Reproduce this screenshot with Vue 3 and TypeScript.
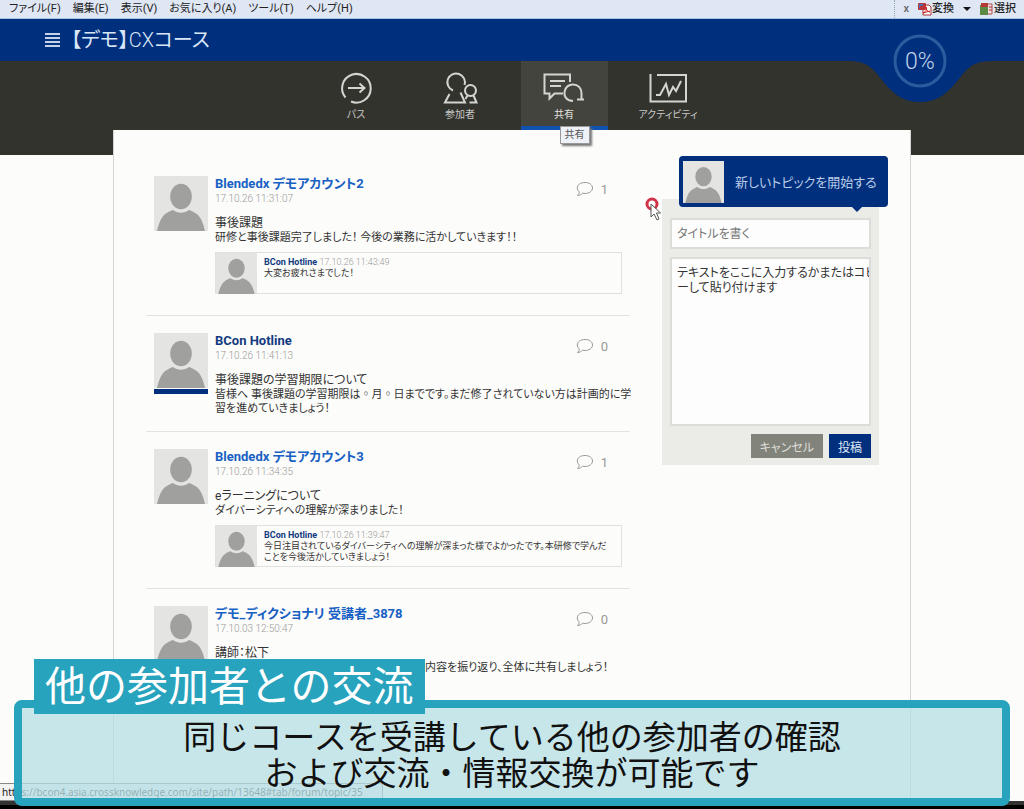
<script setup lang="ts">
import { ref } from 'vue'

interface Reply {
  author: string
  date: string
  text: string
}

interface Post {
  author: string
  date: string
  title: string
  text: string
  comments: number
  staff?: boolean
  indented?: boolean
  reply?: Reply
}

const menus: string[] = ['ファイル(F)', '編集(E)', '表示(V)', 'お気に入り(A)', 'ツール(T)', 'ヘルプ(H)']

const tabs = [
  { id: 'path', label: 'パス' },
  { id: 'people', label: '参加者' },
  { id: 'share', label: '共有' },
  { id: 'activity', label: 'アクティビティ' },
]
const activeTab = ref('share')

const posts: Post[] = [
  {
    author: 'Blendedx デモアカウント2',
    date: '17.10.26 11:31:07',
    title: '事後課題',
    text: '研修と事後課題完了しました！ 今後の業務に活かしていきます！！',
    comments: 1,
    reply: { author: 'BCon Hotline', date: '17.10.26 11:43:49', text: '大変お疲れさまでした！' },
  },
  {
    author: 'BCon Hotline',
    date: '17.10.26 11:41:13',
    title: '事後課題の学習期限について',
    text: '皆様へ 事後課題の学習期限は◦月◦日までです。まだ修了されていない方は計画的に学\n習を進めていきましょう！',
    comments: 0,
    staff: true,
  },
  {
    author: 'Blendedx デモアカウント3',
    date: '17.10.26 11:34:35',
    title: 'eラーニングについて',
    text: 'ダイバーシティへの理解が深まりました！',
    comments: 1,
    reply: {
      author: 'BCon Hotline',
      date: '17.10.26 11:39:47',
      text: '今日注目されているダイバーシティへの理解が深まった様でよかったです。本研修で学んだ\nことを今後活かしていきましょう！',
    },
  },
  {
    author: 'デモ_ディクショナリ 受講者_3878',
    date: '17.10.03 12:50:47',
    title: '講師：松下',
    text: '内容を振り返り、全体に共有しましょう！',
    comments: 0,
    indented: true,
  },
]

const topicTitle = ref('')
const topicText = ref('テキストをここに入力するかまたはコピ\nーして貼り付けます')
</script>

<template>
  <div class="page">
    <svg class="defs" aria-hidden="true">
      <symbol id="avatar" viewBox="0 0 54 55" preserveAspectRatio="none">
        <rect width="54" height="55" fill="#e4e4e3" />
        <ellipse cx="27" cy="20.500" rx="10.800" ry="12.700" fill="#a0a09f" />
        <path d="M3 55C5 46 8 40 12 37.500C15 35.500 17 34.500 19 34C24 37.500 30 37.500 35 34C37 34.500 39 35.500 42 37.500C46 40 49 46 51 55Z" fill="#a0a09f" />
      </symbol>
    </svg>

    <div class="menubar">
      <div class="menus">
        <button v-for="m in menus" :key="m" type="button">{{ m }}</button>
      </div>
      <div class="tools">
        <button type="button" class="close" aria-label="閉じる">x</button>
        <button type="button">
          <svg width="14" height="14" viewBox="0 0 14 14">
            <path d="M5 3H11L13 5V13H5Z" fill="#fff" stroke="#a33" />
            <rect x="0" y="1" width="8" height="7" rx="1" fill="#b9353b" />
            <path d="M1 2H5V4H2V6H1Z" fill="#4a6eb0" />
            <path d="M5 11C9 9 9 6 8 5C8 8 10 10 12 10M5 11L12 9" fill="none" stroke="#c22" />
          </svg>
          変換
        </button>
        <button type="button" class="arrow" aria-label="変換メニュー"><i></i></button>
        <button type="button">
          <svg width="14" height="14" viewBox="0 0 14 14">
            <path d="M4 2H12V12H4Z" fill="#f3dfdd" stroke="#a55" />
            <rect x="0" y="3" width="8" height="10" fill="#5c8a45" />
            <rect x="1" y="1" width="7" height="4" fill="#b33a36" />
            <path d="M9 5H12M9 8H12" stroke="#a33" />
          </svg>
          選択
        </button>
      </div>
    </div>

    <header class="titlebar">
      <button type="button" class="burger" aria-label="メニュー"><i></i><i></i><i></i><i></i></button>
      <h1><b>【デモ】</b>CX<b>コース</b></h1>
      <div class="progress">
        <svg width="150" height="84" viewBox="0 0 150 84">
          <path d="M0 42C18 42 24 45 33 56C46 73 56 83 75 83C94 83 104 73 117 56C126 45 132 42 150 42V0H0Z" fill="#002f7d" />
          <circle cx="75" cy="42" r="25" fill="none" stroke="#2b5c9e" stroke-width="3" />
        </svg>
        <span>0%</span>
      </div>
    </header>

    <nav class="tabs">
      <button
        v-for="t in tabs"
        :key="t.id"
        type="button"
        :class="{ active: t.id === activeTab }"
        @click="activeTab = t.id"
      >
        <svg v-if="t.id === 'path'" width="40" height="36" viewBox="0 0 40 36">
          <path d="M9.500 27.500A14.300 14.300 0 1 1 15 31.500" />
          <path d="M12 18H28M23.500 13.500L28.500 18L23.500 22.500" />
        </svg>
        <svg v-else-if="t.id === 'people'" width="40" height="36" viewBox="0 0 40 36">
          <path d="M13 20.500A8.800 8.800 0 1 1 24.500 15" />
          <path d="M9.500 24L5 32.500H25L20.500 22.500" />
          <circle cx="30.500" cy="20.500" r="5.500" />
          <path d="M27.500 25.500L25.500 29M33.500 25.500L36.500 32.500H29.500" />
        </svg>
        <svg v-else-if="t.id === 'share'" width="42" height="36" viewBox="0 0 42 36">
          <path d="M27 12V4.500H1.500V23.500H6.500V28.500L11.500 23.500H20" />
          <path d="M7 11H22M7 16H18" />
          <path d="M30 31C23 30.500 21 26 21.500 22C22 17 26 14.500 30 14.500C35 14.500 38.500 18 38.500 23V29.500H34M38.500 29.500H41" />
        </svg>
        <svg v-else width="40" height="36" viewBox="0 0 40 36">
          <path d="M2.500 4V31.500H38V5H9" />
          <path d="M8 25H12L18 14L21 25L25 17L28 21L33 11" />
        </svg>
        <span>{{ t.label }}</span>
        <em v-if="t.id === 'share'" class="tooltip">共有</em>
      </button>
    </nav>

    <main class="card">
      <section class="posts">
        <article v-for="p in posts" :key="p.date" class="post">
          <div class="face" :class="{ staff: p.staff }">
            <svg><use href="#avatar" /></svg>
          </div>
          <div class="content">
            <div class="head">
              <div>
                <a href="#" class="author" :class="{ dark: p.staff }">{{ p.author }}</a>
                <time>{{ p.date }}</time>
              </div>
              <button type="button" class="count" aria-label="コメント">
                <svg width="18" height="16" viewBox="0 0 18 16">
                  <path d="M9 1.500C13.500 1.500 16.500 3.800 16.500 7C16.500 10.200 13 12.500 9 12.500C8.200 12.500 7.300 12.400 6.600 12.200C5.300 13.600 3.300 14.500 1.500 14.500C2.600 13.500 3.300 12.300 3.200 10.800C2 9.800 1.300 8.500 1.300 7C1.300 3.800 4.500 1.500 9 1.500Z" />
                </svg>
                <span>{{ p.comments }}</span>
              </button>
            </div>
            <h2>{{ p.title }}</h2>
            <p :class="{ indented: p.indented }">{{ p.text }}</p>
            <div v-if="p.reply" class="reply">
              <svg><use href="#avatar" /></svg>
              <div>
                <a href="#">{{ p.reply.author }}</a> <time>{{ p.reply.date }}</time>
                <p>{{ p.reply.text }}</p>
              </div>
            </div>
          </div>
        </article>
      </section>

      <aside class="compose">
        <button type="button" class="start">
          <svg><use href="#avatar" /></svg>
          <span>新しいトピックを開始する</span>
        </button>
        <form @submit.prevent>
          <input v-model="topicTitle" type="text" placeholder="タイトルを書く" aria-label="タイトル" />
          <textarea v-model="topicText" aria-label="本文"></textarea>
          <div class="actions">
            <button type="button">キャンセル</button>
            <button type="submit" class="primary">投稿</button>
          </div>
        </form>
        <svg class="pointer" width="20" height="26" viewBox="0 0 20 26">
          <circle cx="8" cy="8" r="5" fill="#fff" stroke="#cf3347" stroke-width="3" />
          <path d="M7 8V21L10 18L13 24L15 23L12.500 17H16.500Z" fill="#fff" stroke="#555" />
        </svg>
      </aside>
    </main>

    <footer class="base"></footer>
    <div class="status">https://bcon4.asia.crossknowledge.com/site/path/13648#tab/forum/topic/35</div>

    <section class="caption">
      <h3>他の参加者との交流</h3>
      <p>同じコースを受講している他の参加者の確認<br />および交流・情報交換が可能です</p>
    </section>
  </div>
</template>

<style>
body {
  margin: 0;
  background: #fcfcfb;
}
</style>

<style scoped>
.page {
  position: relative;
  display: flex;
  flex-direction: column;
  height: 100vh;
  overflow: hidden;
  color: #333;
  font-family: Roboto, "Noto Sans CJK JP", sans-serif;
  font-size: 12px;
  font-feature-settings: "palt";
}
.page * {
  box-sizing: border-box;
}
button,
input,
textarea {
  margin: 0;
  padding: 0;
  border: 0;
  background: none;
  color: inherit;
  font: inherit;
  font-feature-settings: inherit;
}
h1, h2, h3, p {
  margin: 0;
  font-weight: 400;
}
a {
  text-decoration: none;
}
.defs {
  position: absolute;
  width: 0;
  height: 0;
}

.menubar {
  display: flex;
  flex: none;
  justify-content: space-between;
  height: 19px;
  padding: 0 8px 0 9px;
  border-bottom: 1px solid #a9c3e6;
  background: #dfe6f4;
  color: #222;
  font-size: 11px;
  line-height: 16px;
}
.menus {
  display: flex;
  gap: 12px;
}
.tools {
  display: flex;
  align-items: center;
  gap: 9px;
  padding-left: 8px;
  border-left: 1px dotted #9aa3b3;
}
.tools button {
  display: flex;
  align-items: center;
  font-weight: 500;
}
.tools .close {
  color: #666;
}
.arrow i {
  border: 4px solid transparent;
  border-top-color: #111;
  border-bottom: 0;
}

.titlebar {
  position: relative;
  z-index: 2;
  display: flex;
  flex: none;
  align-items: center;
  gap: 11px;
  height: 42px;
  padding-left: 45px;
  background: #002f7d;
  color: #d9e6f7;
}
.burger {
  display: grid;
  gap: 2px;
  width: 15px;
}
.burger i {
  height: 2px;
  background: #c3d3ea;
}
h1 {
  font-size: 20px;
  font-weight: 300;
  line-height: 30px;
}
h1 b {
  font-weight: 400;
}
.progress {
  position: absolute;
  top: 0;
  right: 29px;
  display: grid;
  place-items: center;
}
.progress > * {
  grid-area: 1 / 1;
}
.progress span {
  color: #c3d3ea;
  font-size: 23px;
  font-weight: 300;
}

.tabs {
  display: flex;
  flex: none;
  justify-content: center;
  gap: 17px;
  height: 94px;
  background: #33332e;
}
.tabs button {
  position: relative;
  display: flex;
  flex-direction: column;
  align-items: center;
  width: 87px;
  height: 69px;
  padding-top: 9px;
  border-bottom: 4px solid transparent;
  color: #c9c9c6;
  font-size: 10px;
  line-height: 18px;
}
.tabs button.active {
  border-bottom-color: #0f52b0;
  background: #44443f;
  color: #e2e2df;
}
.tabs svg {
  flex: none;
  fill: none;
  stroke: #d4d4d0;
  stroke-width: 2;
}
.tooltip {
  position: absolute;
  top: 65px;
  left: 39px;
  z-index: 3;
  width: 30px;
  border: 1px solid #999;
  background: #eff1f8;
  box-shadow: 2px 2px 2px #777;
  color: #555;
  font-style: normal;
  line-height: 16px;
}

.card {
  display: flex;
  flex: 1;
  align-items: flex-start;
  justify-content: space-between;
  width: calc(100% - 226px);
  min-height: 0;
  margin: -25px auto 0;
  padding: 26px 31px 0 32px;
  border: 1px solid #d4d4d2;
  border-top: 0;
  border-bottom: 0;
  background: #fcfcfa;
}
.posts {
  flex: 1;
  max-width: 484px;
}
.post {
  display: flex;
  gap: 7px;
  padding: 17px 8px 15px;
  border-bottom: 1px solid #e3e3e1;
}
.post:first-child {
  padding-top: 20px;
}
.post:last-child {
  border-bottom: 0;
}
.face {
  flex: none;
  width: 54px;
}
.face svg {
  display: block;
  width: 54px;
  height: 55px;
}
.face.staff::after {
  display: block;
  height: 5px;
  margin-top: 1px;
  background: #002f7d;
  content: "";
}
.content {
  flex: 1;
  min-width: 0;
}
.head {
  display: flex;
  justify-content: space-between;
  height: 40px;
}
.author {
  display: block;
  color: #1760c4;
  font-size: 13px;
  font-weight: 700;
  line-height: 16px;
}
.dark,
.reply a {
  color: #123a80;
}
time {
  color: #999;
  font-size: 10px;
  font-weight: 300;
}
.head time {
  display: block;
  line-height: 13px;
}
.count {
  display: flex;
  align-items: center;
  gap: 7px;
  height: 26px;
  margin-right: 14px;
  color: #999;
  font-size: 13px;
}
.count svg {
  fill: none;
  stroke: #999;
}
h2,
.content > p {
  font-size: 12px;
  line-height: 14px;
  white-space: pre;
}
h2 {
  line-height: 15px;
}
.content > p {
  font-size: 11px;
}
.content > .indented {
  padding-left: 210px;
}
.reply {
  display: flex;
  gap: 7px;
  height: 42px;
  margin: 7px 0 6px;
  border: 1px solid #e0e0de;
  font-size: 9px;
  line-height: 11px;
}
.reply svg {
  flex: none;
  width: 41px;
  height: 41px;
}
.reply div {
  padding-top: 4px;
}
.reply a {
  font-weight: 700;
}
.reply time {
  font-size: 9px;
}
.reply p {
  font-size: 9px;
  white-space: pre;
}

.compose {
  position: relative;
  display: flex;
  flex-direction: column;
  width: 217px;
}
.start {
  position: relative;
  z-index: 1;
  display: flex;
  align-items: center;
  gap: 11px;
  width: 209px;
  height: 51px;
  margin-left: 17px;
  padding-left: 4px;
  border-radius: 4px;
  background: #002f7d;
  color: #b9cbe8;
  font-size: 13px;
  white-space: nowrap;
}
.start svg {
  width: 41px;
  height: 42px;
}
.start::after {
  position: absolute;
  top: 100%;
  right: 26px;
  border: 5px solid transparent;
  border-top-color: #002f7d;
  border-bottom: 0;
  content: "";
}
form {
  display: flex;
  flex-direction: column;
  gap: 8px;
  margin-top: -8px;
  padding: 19px 8px 7px;
  background: #ebece7;
}
input,
textarea {
  width: 100%;
  padding: 0 5px;
  border: 2px solid #dcddd9;
  background: #fdfdfd;
  font-size: 12px;
}
input {
  height: 31px;
}
input::placeholder {
  color: #777;
  opacity: 1;
}
textarea {
  height: 169px;
  padding: 7px 0 0 5px;
  line-height: 15px;
  white-space: pre;
  overflow: hidden;
  resize: none;
}
.actions {
  display: flex;
  justify-content: flex-end;
  gap: 6px;
}
.actions button {
  height: 24px;
  padding: 0 9px;
  background: #82837b;
  color: #deded9;
  font-size: 12px;
}
.actions .primary {
  background: #002f7d;
  color: #dfe8f6;
}
.pointer {
  position: absolute;
  top: 40px;
  left: -18px;
  z-index: 2;
}

.base {
  flex: none;
  height: 8px;
  border-top: 4px solid #333;
  background: #000;
}
.status {
  position: absolute;
  bottom: 8px;
  left: 0;
  min-width: 383px;
  height: 18px;
  padding: 0 6px 0 2px;
  border: 1px solid #888;
  border-left: 0;
  border-radius: 0 3px 0 0;
  background: #f3f3f3;
  color: #222;
  font-family: "Noto Sans", sans-serif;
  font-size: 10px;
  line-height: 16px;
}
.caption {
  position: absolute;
  right: 14px;
  bottom: 3px;
  left: 14px;
  z-index: 5;
  height: 106px;
  padding: 9px 0 0;
  border: 8px solid #27a3bd;
  border-radius: 8px;
  background: rgba(181, 222, 229, 0.76);
  color: #111;
  font-feature-settings: normal;
  font-family: "Noto Sans CJK JP", sans-serif;
  text-align: center;
}
.caption h3 {
  position: absolute;
  top: -49px;
  left: 12px;
  height: 55px;
  padding: 0 11px;
  background: #27a3bd;
  color: #fff;
  font-size: 41px;
  line-height: 48px;
  white-space: nowrap;
}
.caption p {
  font-size: 33px;
  line-height: 36px;
}
</style>
